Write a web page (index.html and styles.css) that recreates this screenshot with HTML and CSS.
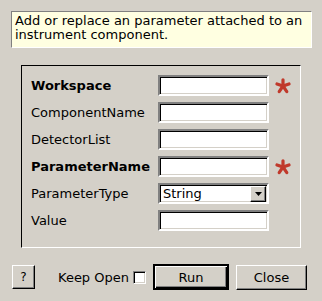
FILE: index.html
```html
<!DOCTYPE html>
<html lang="en">
<head>
  <meta charset="UTF-8" />
  <title>SetInstrumentParameter</title>
  <link rel="stylesheet" href="styles.css">
</head>
<body>
  <div class="dialog">
    <div class="desc">Add or replace an parameter attached to an instrument component.</div>

    <div class="group">
      <label class="lbl req">Workspace</label>
      <input class="field" type="text" />
      <svg class="star" viewBox="0 0 16 16"><g stroke="#c0392b" stroke-width="3.2" stroke-linecap="round"><line x1="8" y1="8" x2="8" y2="1.8"/><line x1="8" y1="8" x2="14" y2="6"/><line x1="8" y1="8" x2="11.8" y2="13.6"/><line x1="8" y1="8" x2="4.2" y2="13.6"/><line x1="8" y1="8" x2="2" y2="6"/></g></svg>

      <label class="lbl">ComponentName</label>
      <input class="field" type="text" />
      <span></span>

      <label class="lbl">DetectorList</label>
      <input class="field" type="text" />
      <span></span>

      <label class="lbl req">ParameterName</label>
      <input class="field" type="text" />
      <svg class="star" viewBox="0 0 16 16"><g stroke="#c0392b" stroke-width="3.2" stroke-linecap="round"><line x1="8" y1="8" x2="8" y2="1.8"/><line x1="8" y1="8" x2="14" y2="6"/><line x1="8" y1="8" x2="11.8" y2="13.6"/><line x1="8" y1="8" x2="4.2" y2="13.6"/><line x1="8" y1="8" x2="2" y2="6"/></g></svg>

      <label class="lbl">ParameterType</label>
      <div class="combo">
        <span class="combo-text">String</span>
        <span class="combo-btn"><svg viewBox="0 0 7 4" width="7" height="4"><polygon points="0,0 7,0 3.5,4" fill="#000"/></svg></span>
      </div>
      <span></span>

      <label class="lbl">Value</label>
      <input class="field" type="text" />
      <span></span>
    </div>

    <div class="actions">
      <button class="btn help">?</button>
      <span class="keep">Keep Open</span>
      <span class="check"></span>
      <button class="btn run">Run</button>
      <button class="btn close">Close</button>
    </div>
  </div>
</body>
</html>
```

FILE: styles.css
```css
body { margin: 0; background: #d4d0c8; font-family: "DejaVu Sans", sans-serif; font-size: 13px; color: #000; }
.dialog { padding: 11px 0 0 11px; }
.desc { width: 294px; height: 31px; background: #ffffe1; border: 1px solid #808080; border-right-color: #fff; border-bottom-color: #fff; padding: 2px 2px 2px 3px; line-height: 14px; }
.group { margin: 17px 0 0 10px; width: 269px; height: 164px; border: 1px solid #000; border-right-color: #fff; border-bottom-color: #fff; padding: 9px 0 8px 9px; display: grid; grid-template-columns: 127px 111px 22px; grid-auto-rows: 21px; row-gap: 6px; align-items: center; align-content: start; }
.lbl { white-space: nowrap; }
.req { font-weight: bold; }
.field { box-sizing: border-box; width: 111px; height: 21px; margin: 0; padding: 0 3px; background: #fff; border: 2px solid; border-color: #808080 #fff #fff #808080; box-shadow: inset 1px 1px 0 #000, inset -1px -1px 0 #d4d0c8; outline: none; }
.star { width: 16px; height: 16px; margin-left: 6px; }
.combo { box-sizing: border-box; width: 111px; height: 21px; display: flex; align-items: center; background: #fff; border: 2px solid; border-color: #808080 #fff #fff #808080; box-shadow: inset 1px 1px 0 #000, inset -1px -1px 0 #d4d0c8; padding: 1px 1px 1px 2px; }
.combo-text { flex: 1; padding-left: 1px; }
.combo-btn { box-sizing: border-box; width: 16px; height: 16px; display: flex; align-items: center; justify-content: center; background: #d4d0c8; border: 1px solid; border-color: #fff #000 #000 #fff; box-shadow: inset -1px -1px 0 #808080; }
.actions { display: flex; align-items: center; margin-top: 16px; margin-left: 1px; height: 26px; }
.btn { box-sizing: border-box; font-family: "DejaVu Sans", sans-serif; font-size: 13px; background: #d4d0c8; color: #000; border: 1px solid; border-color: #fff #000 #000 #fff; box-shadow: inset -1px -1px 0 #808080; padding: 0; margin: 0; }
.help { width: 23px; height: 24px; font-size: 12px; }
.keep { margin-left: 23px; }
.check { box-sizing: border-box; width: 13px; height: 13px; margin-left: 4px; background: #fff; border: 1px solid; border-color: #808080 #fff #fff #808080; box-shadow: inset 1px 1px 0 #000, inset -1px -1px 0 #d4d0c8; }
.run { width: 76px; height: 26px; margin-left: 7px; outline: 1px solid #000; outline-offset: -1px; border-width: 2px 2px 2px 2px; border-color: #000; box-shadow: inset 1px 1px 0 #fff, inset -1px -1px 0 #000, inset -2px -2px 0 #808080; }
.close { width: 71px; height: 25px; margin-left: 7px; }
```
